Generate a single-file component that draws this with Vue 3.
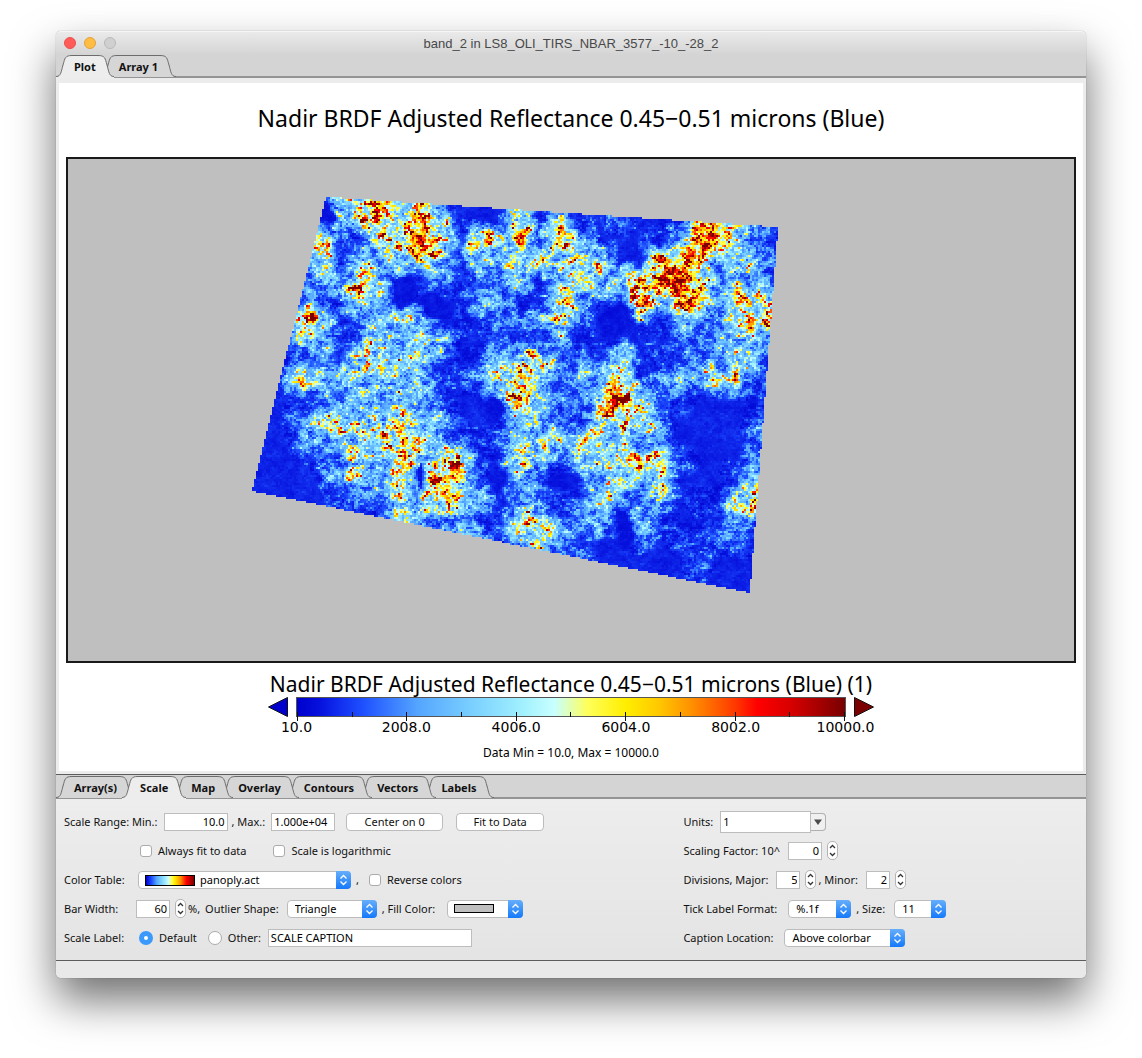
<script setup>
import { onMounted, ref } from 'vue'

const viewTabs = ['Plot', 'Array 1']
const optionTabs = ['Array(s)', 'Scale', 'Map', 'Overlay', 'Contours', 'Vectors', 'Labels']
const activeView = ref('Plot')
const activeOption = ref('Scale')

const form = ref({
  min: '10.0',
  max: '1.000e+04',
  alwaysFit: false,
  logarithmic: false,
  table: 'panoply.act',
  reverse: false,
  barWidth: 60,
  outlier: 'Triangle',
  labelMode: 'default',
  caption: 'SCALE CAPTION',
  units: '1',
  factor: 0,
  major: 5,
  minor: 2,
  format: '%.1f',
  size: '11',
  location: 'Above colorbar'
})

const tickLabels = ['10.0', '2008.0', '4006.0', '6004.0', '8002.0', '10000.0']

/* Colour table: position along the scale, then r, g, b */
const stops = [
  [0, 0, 0, 200],
  [0.04, 6, 16, 220],
  [0.08, 18, 48, 240],
  [0.12, 30, 80, 255],
  [0.19, 84, 165, 255],
  [0.3, 122, 208, 255],
  [0.4, 160, 240, 255],
  [0.47, 200, 255, 255],
  [0.53, 255, 255, 90],
  [0.6, 255, 238, 0],
  [0.66, 255, 200, 0],
  [0.72, 255, 144, 0],
  [0.8, 255, 56, 0],
  [0.84, 255, 0, 0],
  [0.9, 216, 0, 0],
  [1, 120, 0, 0]
]

function colour(t) {
  const v = Math.min(1, Math.max(0, t))
  let i = 1
  while (i < stops.length - 1 && stops[i][0] < v) i++
  const a = stops[i - 1]
  const b = stops[i]
  const f = (v - a[0]) / (b[0] - a[0])
  return [1, 2, 3].map((k) => a[k] + (b[k] - a[k]) * f)
}

/* Coarse reflectance samples, one digit per 10 cells each way */
const field = [
  '111145756211111111111111111',
  '111145757511151521211187431',
  '111632658636482731112488342',
  '111524347325356455117883533',
  '113426412322351454557952431',
  '112326411113311633264774755',
  '116513454121324531122433655',
  '115413614411222311211123333',
  '112325544312465332422232511',
  '116334544213564235723426431',
  '112334443111364325742211111',
  '112444563411143224662111122',
  '112344675421355454532111133',
  '111235464462153334576211133',
  '111145463672042114436111366',
  '111123244663133224334122444',
  '111111253332164334142112311',
  '111111111344246321121222311',
  '111111111111144321111131111',
  '111111111111111111111111111',
  '111111111111111111111111111'
]
const levels = [0.03, 0.065, 0.1, 0.17, 0.28, 0.41, 0.52, 0.62, 0.74, 0.86]

/* Small bright or dark patches: x, y, radius x, radius y, strength */
const patches = [
  [329, 212, 7, 12, -0.3],
  [395, 204, 8, 5, 0.3],
  [380, 222, 5, 8, 0.15],
  [418, 238, 8, 6, 0.2],
  [489, 239, 8, 8, 0.35],
  [516, 237, 6, 9, 0.4],
  [516, 262, 5, 10, 0.25],
  [473, 248, 7, 7, 0.35],
  [561, 240, 8, 8, 0.3],
  [430, 252, 6, 10, 0.25],
  [540, 255, 8, 6, 0.25],
  [703, 238, 11, 12, 0.3],
  [690, 258, 12, 10, 0.2],
  [679, 275, 10, 7, 0.15],
  [657, 258, 7, 7, 0.25],
  [655, 288, 20, 5, 0.35],
  [615, 288, 18, 4, 0.2],
  [690, 299, 13, 6, 0.35],
  [567, 290, 7, 5, 0.35],
  [567, 304, 6, 6, 0.35],
  [642, 304, 6, 10, 0.35],
  [737, 292, 10, 8, 0.3],
  [745, 322, 9, 7, 0.15],
  [592, 267, 10, 6, 0.2],
  [325, 244, 7, 10, 0.25],
  [363, 274, 6, 7, 0.2],
  [354, 285, 7, 5, 0.2],
  [315, 328, 4, 14, 0.35],
  [303, 332, 4, 8, 0.25],
  [313, 307, 6, 3, 0.3],
  [296, 372, 6, 6, 0.25],
  [303, 384, 3, 8, 0.2],
  [400, 295, 9, 16, -0.3],
  [434, 308, 9, 13, -0.3],
  [401, 436, 4, 10, 0.4],
  [407, 465, 4, 18, 0.35],
  [391, 414, 6, 5, 0.3],
  [378, 440, 8, 4, 0.25],
  [365, 465, 5, 8, 0.2],
  [420, 442, 4, 12, 0.25],
  [435, 475, 4, 12, 0.3],
  [455, 475, 7, 13, 0.3],
  [443, 495, 6, 8, 0.3],
  [420, 474, 4, 14, -0.35],
  [496, 400, 9, 14, -0.2],
  [512, 388, 14, 22, 0.12],
  [610, 388, 7, 12, 0.35],
  [616, 392, 4, 5, 0.15],
  [629, 406, 6, 5, 0.35],
  [634, 430, 7, 10, 0.25],
  [635, 456, 8, 6, 0.35],
  [662, 472, 4, 12, 0.4],
  [712, 382, 8, 5, 0.45],
  [733, 375, 5, 7, 0.4],
  [755, 494, 3, 10, 0.45],
  [744, 507, 7, 5, 0.3],
  [726, 507, 5, 3, 0.35],
  [636, 509, 6, 6, 0.3],
  [522, 462, 5, 18, 0.15],
  [530, 528, 9, 8, 0.15],
  [620, 318, 16, 14, -0.2],
  [625, 526, 6, 14, -0.2],
  [565, 482, 12, 8, -0.12]
]

/* Outline of the swath, in the same coordinates as the patches */
const outline = { tl: [326, 197], tr: [778, 227], br: [750, 593], bl: [252, 491] }
const originX = 68
const originY = 159
const columns = 503
const rows = 251

function hash(x, y, seed) {
  let h = Math.imul(x, 374761393) ^ Math.imul(y, 668265263) ^ Math.imul(seed, 1442695041)
  h = Math.imul(h ^ (h >>> 13), 1274126177)
  h = Math.imul(h ^ (h >>> 16), 2246822519)
  return ((h ^ (h >>> 15)) >>> 0) / 4294967296
}

function smooth(x, y, size, seed) {
  const gx = Math.floor(x / size)
  const gy = Math.floor(y / size)
  const fx = x / size - gx
  const fy = y / size - gy
  const top = hash(gx, gy, seed) * (1 - fx) + hash(gx + 1, gy, seed) * fx
  const bottom = hash(gx, gy + 1, seed) * (1 - fx) + hash(gx + 1, gy + 1, seed) * fx
  return top * (1 - fy) + bottom * fy - 0.5
}

function sample(x, y) {
  const gx = Math.min(25.99, Math.max(0, (x - 260) / 20))
  const gy = Math.min(19.99, Math.max(0, (y - 200) / 20))
  const i = Math.floor(gx)
  const j = Math.floor(gy)
  const at = (r, c) => levels[Number(field[r][c])]
  const fx = gx - i
  const fy = gy - j
  return (
    (at(j, i) * (1 - fx) + at(j, i + 1) * fx) * (1 - fy) +
    (at(j + 1, i) * (1 - fx) + at(j + 1, i + 1) * fx) * fy
  )
}

function side(a, b, x, y) {
  return (b[0] - a[0]) * (y - a[1]) - (b[1] - a[1]) * (x - a[0])
}

function inside(x, y) {
  const { tl, tr, br, bl } = outline
  return side(tl, tr, x, y) > 0 && side(tr, br, x, y) > 0 && side(br, bl, x, y) > 0 && side(bl, tl, x, y) > 0
}

const plot = ref(null)

onMounted(() => {
  const context = plot.value.getContext('2d')
  const image = context.createImageData(columns, rows)
  for (let r = 0; r < rows; r++) {
    for (let c = 0; c < columns; c++) {
      const x = originX + c * 2 + 1
      const y = originY + r * 2 + 1
      const k = (r * columns + c) * 4
      let rgb = [191, 191, 191]
      if (inside(x, y)) {
        const wx = x + smooth(x, y, 11, 7) * 10
        const wy = y + smooth(x, y, 11, 8) * 10
        let v = sample(wx, wy)
        for (const [px, py, rx, ry, s] of patches) {
          const d = ((wx - px) / rx) ** 2 + ((wy - py) / ry) ** 2
          if (d < 5) v += s * 0.75 * Math.exp(-d)
        }
        v = Math.max(0.045, Math.min(0.88, v))
        const clump = smooth(x, y, 16, 2) * 0.7 + smooth(x, y, 8, 3) * 1.1 + smooth(x, y, 4, 4) * 1.2
        const grain = (hash(c, r, 5) - 0.5) * 0.8 + (hash(c >> 1, r, 6) - 0.5) * 0.5
        const spread = v < 0.07 ? 0.4 : v > 0.6 ? 0.7 : 1.05
        v *= Math.exp((clump + grain) * spread) * 0.96
        rgb = colour(v)
      }
      image.data[k] = rgb[0]
      image.data[k + 1] = rgb[1]
      image.data[k + 2] = rgb[2]
      image.data[k + 3] = 255
    }
  }
  context.putImageData(image, 0, 0)
})
</script>

<template>
  <main class="desktop">
    <section class="window">
      <header class="titlebar">
        <div class="lights">
          <button class="light close" aria-label="Close"></button>
          <button class="light minimise" aria-label="Minimise"></button>
          <button class="light zoom" aria-label="Zoom" disabled></button>
        </div>
        <h1>band_2 in LS8_OLI_TIRS_NBAR_3577_-10_-28_2</h1>
      </header>

      <nav class="tabs">
        <button
          v-for="(name, i) in viewTabs"
          :key="name"
          class="tab"
          :class="{ active: name === activeView }"
          :style="{ zIndex: name === activeView ? 20 : 10 - i }"
          @click="activeView = name"
        >
          <svg class="cap" viewBox="0 0 16 22"><path class="fill" d="M0 22C5 22 5 17 7 10C9 3 9 0 16 0V22Z" /><path class="edge" d="M0 21.5C5 21.5 5 17 7 10C9 3 9 .5 16 .5" /></svg>
          <span class="tab-label">{{ name }}</span>
          <svg class="cap" viewBox="0 0 16 22"><path class="fill" d="M16 22C11 22 11 17 9 10C7 3 7 0 0 0V22Z" /><path class="edge" d="M16 21.5C11 21.5 11 17 9 10C7 3 7 .5 0 .5" /></svg>
        </button>
      </nav>

      <div class="plot-frame">
        <figure class="plot">
          <h2>Nadir BRDF Adjusted Reflectance 0.45−0.51 microns (Blue)</h2>
          <canvas ref="plot" class="map" :width="columns" :height="rows"></canvas>
          <figcaption>
            <h3>Nadir BRDF Adjusted Reflectance 0.45−0.51 microns (Blue) (1)</h3>
            <div class="scale">
              <svg class="outlier" viewBox="0 0 20 20"><path d="M.5 10L19.500 .5V19.500Z" fill="#0000cd" stroke="#111" /></svg>
              <div class="bar">
                <div class="ramp">
                  <i v-for="n in 11" :key="n" :class="n % 2 ? 'major' : 'minor'"></i>
                </div>
                <div class="ticks">
                  <span v-for="t in tickLabels" :key="t">{{ t }}</span>
                </div>
              </div>
              <svg class="outlier" viewBox="0 0 20 20"><path d="M19.500 10L.5 .5V19.500Z" fill="#7b0000" stroke="#111" /></svg>
            </div>
            <p>Data Min = 10.0, Max = 10000.0</p>
          </figcaption>
        </figure>
      </div>

      <nav class="tabs lower">
        <button
          v-for="(name, i) in optionTabs"
          :key="name"
          class="tab"
          :class="{ active: name === activeOption }"
          :style="{ zIndex: name === activeOption ? 20 : 10 - i }"
          @click="activeOption = name"
        >
          <svg class="cap" viewBox="0 0 16 22"><path class="fill" d="M0 22C5 22 5 17 7 10C9 3 9 0 16 0V22Z" /><path class="edge" d="M0 21.5C5 21.5 5 17 7 10C9 3 9 .5 16 .5" /></svg>
          <span class="tab-label">{{ name }}</span>
          <svg class="cap" viewBox="0 0 16 22"><path class="fill" d="M16 22C11 22 11 17 9 10C7 3 7 0 0 0V22Z" /><path class="edge" d="M16 21.5C11 21.5 11 17 9 10C7 3 7 .5 0 .5" /></svg>
        </button>
      </nav>

      <form class="options" @submit.prevent>
        <div class="column main">
          <div class="row">
            <label class="range" for="min">Scale Range: Min.:</label>
            <input id="min" v-model="form.min" class="text num w64" />
            <label class="range-max" for="max">, Max.:</label>
            <input id="max" v-model="form.max" class="text w64" />
            <button class="push center" type="button">Center on 0</button>
            <button class="push fit" type="button">Fit to Data</button>
          </div>
          <div class="row checks">
            <label class="tick"><input v-model="form.alwaysFit" type="checkbox" />Always fit to data</label>
            <label class="tick"><input v-model="form.logarithmic" type="checkbox" />Scale is logarithmic</label>
          </div>
          <div class="row">
            <label class="lead" for="table">Color Table:</label>
            <span class="pick table">
              <select id="table" v-model="form.table"><option>panoply.act</option></select>
              <i class="swatch rainbow"></i>
              <svg viewBox="0 0 15 18"><path d="M4.500 7.500L7.500 4.500L10.500 7.500M4.500 10.500L7.500 13.500L10.500 10.500" /></svg>
            </span>
            <span class="comma">,</span>
            <label class="tick"><input v-model="form.reverse" type="checkbox" />Reverse colors</label>
          </div>
          <div class="row">
            <label class="lead narrow" for="width">Bar Width:</label>
            <input id="width" v-model="form.barWidth" class="text num w34" />
            <span class="spin">
              <button type="button" aria-label="Wider" @click="form.barWidth++"><svg viewBox="0 0 9 8"><path d="M2 6L4.500 3.500L7 6" /></svg></button>
              <button type="button" aria-label="Narrower" @click="form.barWidth--"><svg viewBox="0 0 9 8"><path d="M2 2L4.500 4.500L7 2" /></svg></button>
            </span>
            <span class="unit">%,</span>
            <label class="outlier-label" for="outlier">Outlier Shape:</label>
            <span class="pick triangle">
              <select id="outlier" v-model="form.outlier"><option>Triangle</option></select>
              <svg viewBox="0 0 15 18"><path d="M4.500 7.500L7.500 4.500L10.500 7.500M4.500 10.500L7.500 13.500L10.500 10.500" /></svg>
            </span>
            <label class="fill-label" for="fill">, Fill Color:</label>
            <span class="pick colour">
              <select id="fill"><option aria-label="Gray"></option></select>
              <i class="swatch gray"></i>
              <svg viewBox="0 0 15 18"><path d="M4.500 7.500L7.500 4.500L10.500 7.500M4.500 10.500L7.500 13.500L10.500 10.500" /></svg>
            </span>
          </div>
          <div class="row">
            <span class="lead">Scale Label:</span>
            <label class="tick radio default"><input v-model="form.labelMode" type="radio" name="label" value="default" />Default</label>
            <label class="tick radio"><input v-model="form.labelMode" type="radio" name="label" value="other" />Other:</label>
            <input v-model="form.caption" class="text caption" aria-label="Other scale label" />
          </div>
        </div>

        <div class="column side">
          <div class="row">
            <label for="units">Units:</label>
            <span class="combo">
              <input id="units" v-model="form.units" class="text" />
              <button type="button" aria-label="Choose units"><svg viewBox="0 0 14 16"><path d="M3 5.500H11L7 11Z" /></svg></button>
            </span>
          </div>
          <div class="row">
            <label for="factor">Scaling Factor: 10^</label>
            <input id="factor" v-model="form.factor" class="text num w34" />
            <span class="spin">
              <button type="button" aria-label="Raise factor" @click="form.factor++"><svg viewBox="0 0 9 8"><path d="M2 6L4.500 3.500L7 6" /></svg></button>
              <button type="button" aria-label="Lower factor" @click="form.factor--"><svg viewBox="0 0 9 8"><path d="M2 2L4.500 4.500L7 2" /></svg></button>
            </span>
          </div>
          <div class="row">
            <label for="major">Divisions, Major:</label>
            <input id="major" v-model="form.major" class="text num w24" />
            <span class="spin">
              <button type="button" aria-label="More major" @click="form.major++"><svg viewBox="0 0 9 8"><path d="M2 6L4.500 3.500L7 6" /></svg></button>
              <button type="button" aria-label="Fewer major" @click="form.major--"><svg viewBox="0 0 9 8"><path d="M2 2L4.500 4.500L7 2" /></svg></button>
            </span>
            <label class="unit" for="minor">, Minor:</label>
            <input id="minor" v-model="form.minor" class="text num w24" />
            <span class="spin">
              <button type="button" aria-label="More minor" @click="form.minor++"><svg viewBox="0 0 9 8"><path d="M2 6L4.500 3.500L7 6" /></svg></button>
              <button type="button" aria-label="Fewer minor" @click="form.minor--"><svg viewBox="0 0 9 8"><path d="M2 2L4.500 4.500L7 2" /></svg></button>
            </span>
          </div>
          <div class="row">
            <label for="format">Tick Label Format:</label>
            <span class="pick format">
              <select id="format" v-model="form.format"><option>%.1f</option></select>
              <svg viewBox="0 0 15 18"><path d="M4.500 7.500L7.500 4.500L10.500 7.500M4.500 10.500L7.500 13.500L10.500 10.500" /></svg>
            </span>
            <label class="size-label" for="size">, Size:</label>
            <span class="pick size">
              <select id="size" v-model="form.size"><option>11</option></select>
              <svg viewBox="0 0 15 18"><path d="M4.500 7.500L7.500 4.500L10.500 7.500M4.500 10.500L7.500 13.500L10.500 10.500" /></svg>
            </span>
          </div>
          <div class="row">
            <label for="location">Caption Location:</label>
            <span class="pick location">
              <select id="location" v-model="form.location"><option>Above colorbar</option></select>
              <svg viewBox="0 0 15 18"><path d="M4.500 7.500L7.500 4.500L10.500 7.500M4.500 10.500L7.500 13.500L10.500 10.500" /></svg>
            </span>
          </div>
        </div>
      </form>
      <footer class="status"></footer>
    </section>
  </main>
</template>

<style>
body {
  background: #fff;
}
</style>

<style scoped>
* {
  box-sizing: border-box;
}
.desktop {
  padding: 31px 56px 80px;
  overflow: hidden;
  font: 11px/16px 'Noto Sans', 'Open Sans', sans-serif;
  color: #111;
}
.window {
  border-radius: 5px;
  background: #ececec;
  box-shadow:
    0 0 1px rgba(0, 0, 0, 0.5),
    0 22px 44px rgba(0, 0, 0, 0.56);
}
button {
  font: inherit;
  color: inherit;
  border: 0;
  padding: 0;
  background: none;
}
.titlebar {
  position: relative;
  height: 24px;
  display: flex;
  align-items: center;
  justify-content: center;
  border-radius: 5px 5px 0 0;
  border-top: 1px solid #f6f6f6;
  background: linear-gradient(#eaeaea, #d4d4d4);
}
.titlebar h1 {
  margin: 0;
  font: 13px/16px 'Liberation Sans', Arial, sans-serif;
  color: #484848;
}
.lights {
  position: absolute;
  left: 8px;
  top: 5px;
  display: flex;
  gap: 8px;
}
.light {
  width: 12px;
  height: 12px;
  border-radius: 50%;
  border: 1px solid #c2c2c2;
}
.close {
  background: #ff5c58;
  border-color: #e9504c;
}
.minimise {
  background: #ffbd44;
  border-color: #e2a33c;
}
.zoom {
  background: #d0d0d0;
  border-color: #b9b9b9;
}
.tabs {
  display: flex;
  height: 23px;
  background: #d4d4d4;
  border-bottom: 2px solid #949494;
  isolation: isolate;
}
.tabs.lower {
  height: 25px;
  padding-top: 1px;
  border-top: 1px solid #5c5c5c;
}
.tab {
  position: relative;
  display: flex;
  height: 22px;
  margin-right: -13px;
  font: bold 11px/22px 'Noto Sans', 'Open Sans', sans-serif;
  --tab: #d6d6d6;
}
.tab.active {
  --tab: #ededed;
}
.tab-label {
  padding: 0 2px;
  height: 22px;
  background: var(--tab);
  border-top: 1px solid #6c6c6c;
}
.active .tab-label {
  height: 23px;
}
.active .cap {
  box-shadow: 0 1px #ededed;
}
.cap {
  width: 16px;
  height: 22px;
  flex: none;
}
.cap .fill {
  fill: var(--tab);
}
.cap .edge {
  fill: none;
  stroke: #6c6c6c;
}
.plot-frame {
  padding: 5px 3px 3px;
}
.plot {
  margin: 0;
  padding: 19px 7px 10px;
  background: #fff;
  text-align: center;
  color: #000;
}
.plot h2 {
  margin: 0 0 23px;
  font: 23px/32px 'Noto Sans', 'Open Sans', sans-serif;
}
.map {
  display: block;
  width: 100%;
  border: 2px solid #1a1a1a;
  image-rendering: pixelated;
}
.plot h3 {
  margin: 8px 0 0;
  font: 21px/26px 'Noto Sans', 'Open Sans', sans-serif;
}
.scale {
  display: flex;
  justify-content: space-between;
  width: 60%;
  margin: 0 auto;
}
.outlier {
  width: 20px;
  height: 20px;
}
.bar {
  flex: 1;
  margin: 0 8px;
}
.ramp {
  display: flex;
  justify-content: space-between;
  align-items: flex-start;
  height: 20px;
  padding-top: 14px;
  border: 1px solid #555;
  background: linear-gradient(90deg, #0000cc, #0610dc 4%, #1230f0 8%, #1e50ff 12%, #54a5ff 22%, #7ad0ff 32%, #a0f0ff 41%, #c8ffff 47%, #ffff5a 53%, #ffee00 60%, #ffc800 66%, #ff9000 72%, #ff3800 80%, #ff0000 84%, #d80000 90%, #780000);
}
.ramp i {
  width: 1px;
  background: #111;
}
.major {
  height: 9px;
}
.minor {
  height: 5px;
}
.ticks {
  display: flex;
  justify-content: space-between;
  margin-top: 1px;
  font: 14px/18px 'DejaVu Sans', sans-serif;
}
.ticks span {
  display: flex;
  justify-content: center;
  width: 1px;
}
.plot p {
  margin: 9px 0 0;
  font: 12px/16px 'Noto Sans', sans-serif;
}
.options {
  display: flex;
  gap: 11px;
  padding: 8px;
  background: linear-gradient(#ededed, #e4e4e4);
  border-bottom: 1px solid #5c5c5c;
}
.column {
  flex: none;
}
.main {
  width: 60%;
}
.row {
  display: flex;
  align-items: center;
  height: 29px;
  white-space: nowrap;
}
.lead {
  width: 74px;
}
.lead.narrow {
  width: 72px;
}
input,
select {
  font: inherit;
  color: #000;
  margin: 0;
  border-radius: 0;
}
.text {
  height: 18px;
  padding: 0 2px;
  border: 1px solid #bdbdbd;
  background: #fff;
}
.num {
  text-align: right;
}
.w64 {
  width: 64px;
}
.w34 {
  width: 34px;
}
.w24 {
  width: 24px;
}
.range + input {
  margin-left: 6px;
}
.range-max {
  margin: 0 6px 0 4px;
}
.push {
  height: 18px;
  border: 1px solid #bcbcbc;
  border-radius: 4px;
  background: #fff;
}
.center {
  width: 97px;
  margin: 0 13px 0 11px;
}
.fit {
  width: 88px;
}
.checks {
  gap: 27px;
  padding-left: 76px;
}
.tick {
  display: flex;
  align-items: center;
  gap: 6px;
}
.tick input {
  appearance: none;
  width: 12px;
  height: 12px;
  border: 1px solid #ababab;
  border-radius: 3px;
  background: #fff;
}
.tick.radio input {
  width: 14px;
  height: 14px;
  border-radius: 50%;
}
.tick.radio input:checked {
  border: 5px solid #3b99fc;
}
.radio.default {
  margin: 0 11px 0 1px;
}
.caption {
  width: 204px;
  margin-left: 7px;
}
.pick {
  position: relative;
  display: flex;
  height: 18px;
}
.pick select {
  appearance: none;
  width: 100%;
  height: 18px;
  padding: 0 18px 0 7px;
  border: 1px solid #bcbcbc;
  border-radius: 4px;
  background: #fff;
}
.pick svg {
  position: absolute;
  right: 0;
  top: 0;
  width: 15px;
  height: 18px;
  border-radius: 0 4px 4px 0;
  background: linear-gradient(#66aefb, #1479fb);
  pointer-events: none;
}
.pick path {
  fill: none;
  stroke: #fff;
  stroke-width: 1.3;
}
.swatch {
  position: absolute;
  top: 4px;
  left: 7px;
  border: 1px solid #000;
  pointer-events: none;
}
.rainbow {
  width: 50px;
  height: 11px;
  background: linear-gradient(90deg, #0000cc, #1e50ff 12%, #54a5ff 22%, #7ad0ff 32%, #c8ffff 47%, #ffff5a 53%, #ffee00 60%, #ff9000 72%, #ff0000 84%, #780000);
}
.gray {
  width: 40px;
  height: 9px;
  background: #bfbfbf;
}
.table {
  width: 213px;
}
.pick.table select {
  padding-left: 61px;
}
.comma {
  margin: 0 10px 0 5px;
}
.triangle {
  width: 90px;
}
.colour {
  width: 76px;
}
.fill-label {
  margin: 0 12px 0 5px;
}
.size-label {
  margin-left: 5px;
}
.unit {
  margin-left: 2px;
}
.outlier-label {
  margin: 0 8px 0 5px;
}
.spin {
  display: flex;
  flex-direction: column;
  width: 11px;
  height: 19px;
  margin-left: 5px;
  border: 1px solid #b4b4b4;
  border-radius: 5px;
  background: #fff;
}
.spin button {
  display: block;
  height: 50%;
}
.spin svg {
  display: block;
  width: 9px;
  height: 8px;
}
.spin path {
  fill: none;
  stroke: #333;
  stroke-width: 1.3;
}
.side label + .text {
  margin-left: 8px;
}
.side label + .pick {
  margin-left: 11px;
}
.side .size-label + .pick {
  margin-left: 9px;
}
.combo {
  display: flex;
  align-items: center;
  margin-left: 7px;
}
.combo .text {
  width: 91px;
  height: 22px;
}
.combo button {
  width: 15px;
  height: 18px;
  border: 1px solid #b0b0b0;
  border-left: 0;
  border-radius: 0 4px 4px 0;
  background: #f0f0f0;
}
.combo svg {
  display: block;
  width: 14px;
  height: 16px;
  fill: #4c4c4c;
}
.format {
  width: 63px;
}
.size {
  width: 52px;
}
.location {
  width: 121px;
}
.status {
  height: 17px;
  border-radius: 0 0 5px 5px;
  background: #e9e9e9;
}
</style>
